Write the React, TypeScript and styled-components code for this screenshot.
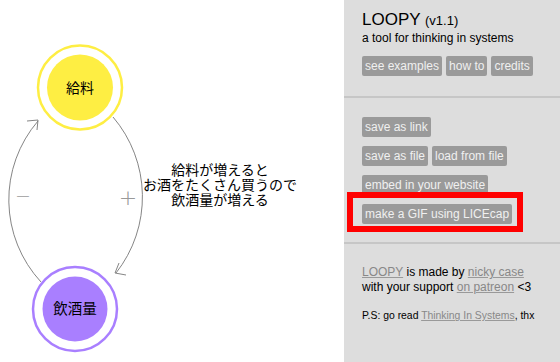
import React from "react";
import styled, { createGlobalStyle } from "styled-components";

const Global = createGlobalStyle`
  html, body { margin: 0; padding: 0; background: #fff; overflow: hidden; }
  body { font-family: "Liberation Sans", Arial, sans-serif; }
`;

const Page = styled.div`
  display: flex;
  width: 560px;
  height: 362px;
`;

const Canvas = styled.div`
  width: 344px;
  height: 362px;
  background: #fff;
  flex: none;
`;

const Sidebar = styled.aside`
  position: relative;
  width: 216px;
  height: 362px;
  background: #dddddd;
  display: flex;
  flex-direction: column;
  color: #000;
`;

const Section = styled.section<{ $pt: number; $pb: number; $divider?: boolean }>`
  padding: ${(p) => p.$pt}px 18px ${(p) => p.$pb}px 18px;
  border-bottom: ${(p) => (p.$divider ? "2px solid #c6c6c6" : "none")};
  display: flex;
  flex-direction: column;
`;

const Title = styled.div`
  font-size: 17px;
  line-height: 21px;
  white-space: nowrap;
`;

const Version = styled.span`
  font-size: 13px;
`;

const Subtitle = styled.div`
  font-size: 12px;
  line-height: 14px;
  white-space: nowrap;
`;

const ButtonRow = styled.div<{ $mt?: number }>`
  display: flex;
  gap: 4px;
  margin-top: ${(p) => p.$mt ?? 0}px;
`;

const Rows = styled.div`
  display: flex;
  flex-direction: column;
  gap: 9px;
`;

const Button = styled.span`
  display: inline-block;
  height: 20px;
  line-height: 20px;
  padding: 0 3px;
  background: #9a9a9a;
  color: #f0f0f0;
  font-size: 12px;
  border-radius: 2px;
  white-space: nowrap;
`;

const Credit = styled.div<{ $size: number; $lh: number; $mt?: number }>`
  font-size: ${(p) => p.$size}px;
  line-height: ${(p) => p.$lh}px;
  margin-top: ${(p) => p.$mt ?? 0}px;
  white-space: nowrap;
`;

const Link = styled.a`
  color: #888;
  text-decoration: underline;
  text-decoration-color: #999;
`;

const Highlight = styled.div`
  position: absolute;
  left: 3px;
  top: 192px;
  width: 164px;
  height: 28px;
  border: 6px solid #ff0000;
`;

const jp = `"Noto Sans CJK JP", "Noto Sans", sans-serif`;

function Diagram() {
  return (
    <svg width="344" height="362" viewBox="0 0 344 362">
      {/* edges */}
      <path d="M113 117 A123 123 0 0 1 116 273" fill="none" stroke="#777" strokeWidth="0.9" />
      <polyline points="126,275 115,273 119,263" fill="none" stroke="#777" strokeWidth="0.9" />
      <path d="M41 282 A121 121 0 0 1 38 121" fill="none" stroke="#777" strokeWidth="0.9" />
      <polyline points="27,121 38,120 37,130" fill="none" stroke="#777" strokeWidth="0.9" />
      <text x="128" y="205" textAnchor="middle" fontFamily="'DejaVu Sans', sans-serif" fontSize="22" fontWeight="200" fill="#999">+</text>
      <text x="23" y="202" textAnchor="middle" fontFamily="'DejaVu Sans', sans-serif" fontSize="19" fontWeight="200" fill="#999">−</text>

      {/* nodes */}
      <circle cx="80" cy="87.5" r="42" fill="none" stroke="#FEEE43" strokeWidth="2.5" />
      <circle cx="80" cy="87.5" r="33" fill="#FEEE43" />
      <text x="80" y="92.5" textAnchor="middle" fontFamily={jp} fontSize="14" fill="#000">給料</text>

      <circle cx="75" cy="309" r="42" fill="none" stroke="#A97FFF" strokeWidth="2.5" />
      <circle cx="75" cy="309" r="32.5" fill="#A97FFF" />
      <text x="75" y="314" textAnchor="middle" fontFamily={jp} fontSize="14.5" fill="#000">飲酒量</text>

      {/* label */}
      <text fontFamily={jp} fontSize="14" fill="#000" textAnchor="middle">
        <tspan x="220" y="175">給料が増えると</tspan>
        <tspan x="220" y="190">お酒をたくさん買うので</tspan>
        <tspan x="220" y="205">飲酒量が増える</tspan>
      </text>
    </svg>
  );
}

export default function App() {
  return (
    <>
      <Global />
      <Page>
        <Canvas>
          <Diagram />
        </Canvas>
        <Sidebar>
          <Section $pt={9} $pb={20} $divider>
            <Title>
              LOOPY <Version>(v1.1)</Version>
            </Title>
            <Subtitle>a tool for thinking in systems</Subtitle>
            <ButtonRow $mt={11}>
              <Button>see examples</Button>
              <Button>how to</Button>
              <Button>credits</Button>
            </ButtonRow>
          </Section>
          <Section $pt={19} $pb={18} $divider>
            <Rows>
              <ButtonRow>
                <Button>save as link</Button>
              </ButtonRow>
              <ButtonRow>
                <Button>save as file</Button>
                <Button>load from file</Button>
              </ButtonRow>
              <ButtonRow>
                <Button>embed in your website</Button>
              </ButtonRow>
              <ButtonRow>
                <Button>make a GIF using LICEcap</Button>
              </ButtonRow>
            </Rows>
          </Section>
          <Section $pt={21} $pb={0}>
            <Credit $size={12} $lh={15}>
              <Link>LOOPY</Link> is made by <Link>nicky case</Link>
            </Credit>
            <Credit $size={12} $lh={15}>
              with your support <Link>on patreon</Link> &lt;3
            </Credit>
            <Credit $size={10.4} $lh={12} $mt={15}>
              P.S: go read <Link>Thinking In Systems</Link>, thx
            </Credit>
          </Section>
          <Highlight />
        </Sidebar>
      </Page>
    </>
  );
}
